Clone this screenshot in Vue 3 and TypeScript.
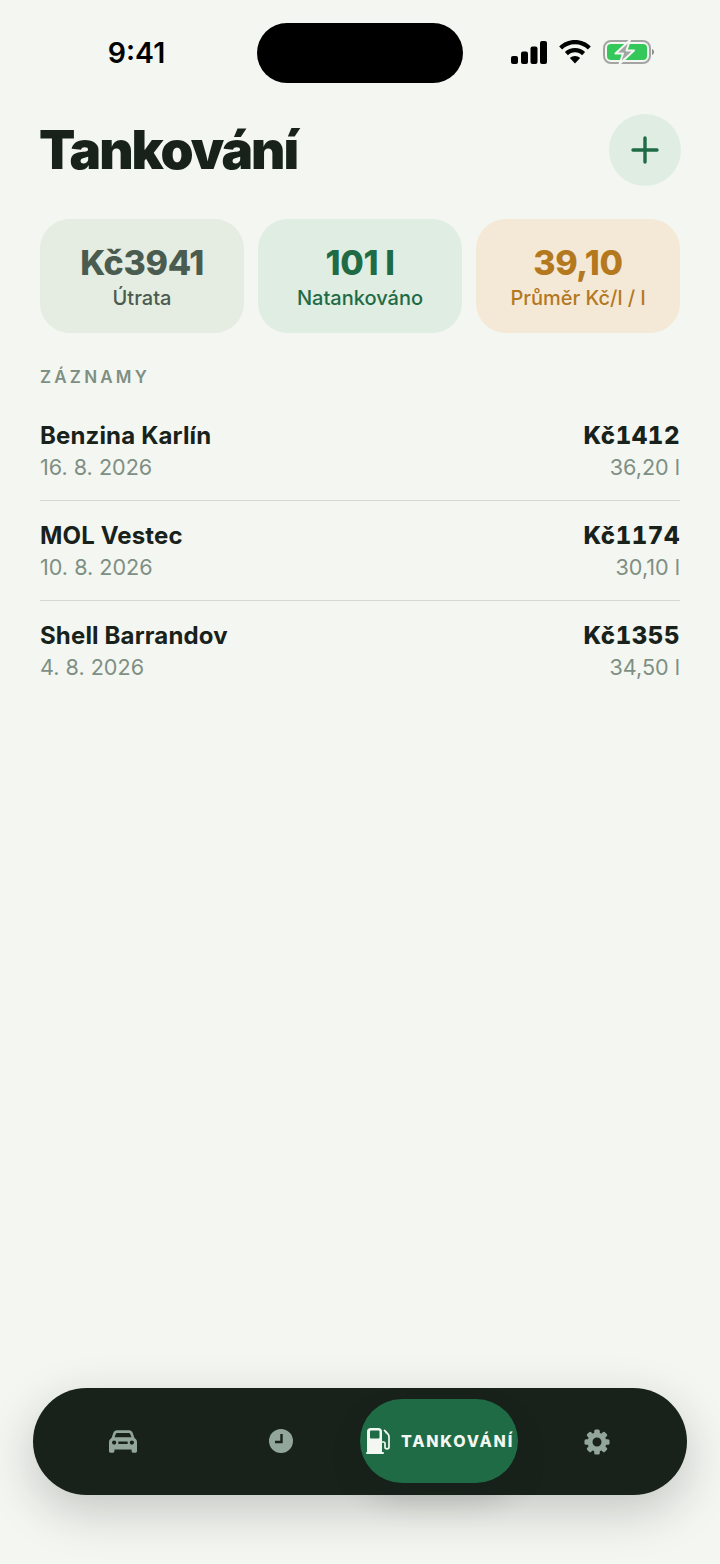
<script setup lang="ts">
interface Stat {
  value: string
  label: string
  tone: string
}

interface Fill {
  station: string
  date: string
  price: string
  litres: string
}

const stats: Stat[] = [
  { value: 'Kč3941', label: 'Útrata', tone: 'grey' },
  { value: '101 l', label: 'Natankováno', tone: 'green' },
  { value: '39,10', label: 'Průměr Kč/l / l', tone: 'amber' },
]

const fills: Fill[] = [
  { station: 'Benzina Karlín', date: '16. 8. 2026', price: 'Kč1412', litres: '36,20 l' },
  { station: 'MOL Vestec', date: '10. 8. 2026', price: 'Kč1174', litres: '30,10 l' },
  { station: 'Shell Barrandov', date: '4. 8. 2026', price: 'Kč1355', litres: '34,50 l' },
]

// the settings cog has eight teeth
const gearTeeth = [0, 45, 90, 135, 180, 225, 270, 315]
</script>

<template>
  <div class="screen">
    <!-- Status bar -->
    <div class="status-bar">
      <span class="clock">9:41</span>
      <div class="island"></div>
      <div class="status-icons">
        <svg width="36" height="23" viewBox="0 0 36 23" fill="#000">
          <rect x="0" y="15" width="7" height="8" rx="2" />
          <rect x="10" y="10.500" width="7" height="12.500" rx="2" />
          <rect x="19.500" y="5.500" width="7" height="17.500" rx="2" />
          <rect x="29" y="0" width="7" height="23" rx="2" />
        </svg>
        <svg width="32" height="24" viewBox="0 0 32 24" fill="#000">
          <path d="M16 0C9.800 0 4.300 2.400.2 6.400l2.900 3.100C6.400 6.200 11 4.200 16 4.200s9.600 2 12.900 5.300l2.900-3.100C27.700 2.400 22.200 0 16 0z" />
          <path d="M16 8c-3.900 0-7.500 1.500-10.100 4.100l3 3.100C10.700 13.300 13.200 12.200 16 12.200s5.300 1.100 7.100 3l3-3.100C23.500 9.500 19.900 8 16 8z" />
          <path d="M16 16c-2 0-3.800.8-5.100 2.100L16 23.500l5.100-5.400C19.800 16.800 18 16 16 16z" />
        </svg>
        <svg width="51" height="24" viewBox="0 0 51 24">
          <rect x="1" y="1" width="46" height="22" rx="7" fill="none" stroke="#a3a5a3" stroke-width="2" />
          <rect x="4" y="4" width="40" height="16" rx="4" fill="#34c759" />
          <path d="M49 9c1.200.4 2 1.600 2 3s-.8 2.600-2 3z" fill="#8c8e8c" />
          <path d="M27 0 12.500 13.500H20L16.500 24 31 10.500h-7.500z" fill="#a3a5a3" stroke="#f4f6f1" stroke-width="2" stroke-linejoin="round" />
        </svg>
      </div>
    </div>

    <header class="page-header">
      <h1 class="page-title">Tankování</h1>
      <button class="add-btn" aria-label="Přidat">
        <svg width="28" height="28" viewBox="0 0 28 28" stroke="#1f6b45" stroke-width="3.400" stroke-linecap="round">
          <path d="M14 2v24M2 14h24" />
        </svg>
      </button>
    </header>

    <section class="stats">
      <div v-for="stat in stats" :key="stat.label" class="stat-card" :class="stat.tone">
        <span class="stat-value">{{ stat.value }}</span>
        <span class="stat-label">{{ stat.label }}</span>
      </div>
    </section>

    <h2 class="section-title">ZÁZNAMY</h2>

    <ul class="fill-list">
      <li v-for="fill in fills" :key="fill.station" class="fill-row">
        <div class="fill-col">
          <span class="fill-station">{{ fill.station }}</span>
          <span class="fill-meta">{{ fill.date }}</span>
        </div>
        <div class="fill-col right">
          <span class="fill-price">{{ fill.price }}</span>
          <span class="fill-meta">{{ fill.litres }}</span>
        </div>
      </li>
    </ul>

    <!-- Bottom navigation -->
    <nav class="tab-bar">
      <div class="tab">
        <svg width="28" height="23" viewBox="0 0 30 24" fill="#93a69b">
          <path fill-rule="evenodd" d="M8.500 0h13c1.800 0 3.200 1 3.800 2.600L27.300 8.200c1.600.9 2.700 2.500 2.700 4.400V22.500c0 .9-.7 1.500-1.500 1.500h-2.800c-.9 0-1.500-.6-1.500-1.500V20.600H5.800v1.900c0 .9-.6 1.500-1.500 1.500H1.500C.7 24 0 23.400 0 22.500V12.600c0-1.900 1.100-3.500 2.700-4.400L4.700 2.600C5.300 1 6.700 0 8.500 0zM8.800 2.800c-.8 0-1.400.4-1.600 1.100L5.900 7.500h18.200l-1.300-3.600c-.2-.7-.8-1.100-1.600-1.100zM5.500 10.800a2.300 2.300 0 1 0 0 4.600 2.300 2.300 0 0 0 0-4.600zm19 0a2.300 2.300 0 1 0 0 4.600 2.300 2.300 0 0 0 0-4.600zM10 12v2.600h10V12z" />
        </svg>
      </div>
      <div class="tab">
        <svg width="24" height="24" viewBox="0 0 24 24">
          <circle cx="12" cy="12" r="12" fill="#93a69b" />
          <path d="M12.500 5v8H6" fill="none" stroke="#18221b" stroke-width="2.400" />
        </svg>
      </div>
      <div class="tab active">
        <svg width="25" height="26" viewBox="0 0 25 26">
          <path d="M1 3.500C1 1.500 2.500 0 4.500 0h8c2 0 3.500 1.500 3.500 3.500V24H1z" fill="#f4f6f1" />
          <rect x="4" y="2.500" width="9.500" height="8" rx="1" fill="#1f6b45" />
          <rect x="0" y="24" width="18" height="2" rx="1" fill="#f4f6f1" />
          <path d="M16 14h1.500c1 0 1.500.8 1.500 1.800v3.200c0 2.400 4 2.400 4 0V9c0-1.800-.8-2.800-1.800-3.800L18 2" fill="none" stroke="#f4f6f1" stroke-width="1.700" />
          <path d="M18.500 1.500l2.500 2.500-1 2.500z" fill="#f4f6f1" />
        </svg>
        <span class="tab-label">TANKOVÁNÍ</span>
      </div>
      <div class="tab gear-tab">
        <svg width="26" height="26" viewBox="0 0 26 26" fill="#93a69b">
          <rect
            v-for="angle in gearTeeth"
            :key="angle"
            x="10.200"
            y="0.500"
            width="5.600"
            height="6"
            rx="1.500"
            :transform="`rotate(${angle} 13 13)`"
          />
          <path fill-rule="evenodd" d="M13 3.500a9.500 9.500 0 1 0 0 19 9.500 9.500 0 0 0 0-19zm0 5a4.500 4.500 0 1 1 0 9 4.500 4.500 0 0 1 0-9z" />
        </svg>
      </div>
    </nav>
  </div>
</template>

<style scoped>
.screen {
  position: relative;
  width: 720px;
  height: 1564px;
  overflow: hidden;
  background: #f4f6f1;
  font-family: Inter, "Noto Sans", sans-serif;
  color: #18221b;
}

/* Status bar */
.status-bar {
  display: grid;
  grid-template-columns: 1fr 206px 1fr;
  align-items: center;
  height: 60px;
  margin-top: 23px;
}

.clock {
  justify-self: center;
  padding-left: 16px;
  font-size: 28.500px;
  font-weight: 600;
  line-height: 60px;
  color: #000;
}

.island {
  justify-self: center;
  width: 206px;
  height: 60px;
  border-radius: 30px;
  background: #000;
}

.status-icons {
  display: flex;
  align-items: center;
  gap: 12px;
  padding: 0 0 2px 48px;
}

/* Header */
.page-header {
  display: flex;
  align-items: center;
  justify-content: space-between;
  padding: 31px 39px 0 39px;
}

.page-title {
  margin: 0;
  font-size: 53px;
  font-weight: 900;
  line-height: 72px;
  letter-spacing: -2px;
}

.add-btn {
  display: flex;
  align-items: center;
  justify-content: center;
  width: 72px;
  height: 72px;
  padding: 0;
  border: none;
  border-radius: 50%;
  background: #dfede3;
}

/* Summary cards */
.stats {
  display: grid;
  grid-template-columns: repeat(3, 1fr);
  gap: 14px;
  margin: 33px 40px 0;
}

.stat-card {
  display: flex;
  flex-direction: column;
  align-items: center;
  height: 114px;
  padding-top: 24px;
  box-sizing: border-box;
  border-radius: 30px;
}

.stat-value {
  font-size: 34px;
  font-weight: 800;
  line-height: 40px;
  letter-spacing: -0.340px;
}

.stat-label {
  margin-top: 2px;
  font-size: 20px;
  font-weight: 500;
  line-height: 27px;
}

.stat-card.grey {
  background: #e5ece1;
  color: #4a5b50;
}

.stat-card.green {
  background: #dfede3;
  color: #1f6b45;
}

.stat-card.amber {
  background: #f4e9d7;
  color: #b4781f;
}

.section-title {
  margin: 33px 40px 0;
  font-size: 17px;
  font-weight: 600;
  line-height: 22px;
  letter-spacing: 3.200px;
  color: #7e8f84;
}

/* Fill-up list */
.fill-list {
  margin: 13px 40px 0;
  padding: 0;
  list-style: none;
}

.fill-row {
  display: flex;
  justify-content: space-between;
  box-sizing: border-box;
  height: 100px;
  padding-top: 19px;
  border-bottom: 1px solid #d3d8d0;
}

.fill-row:last-child {
  border-bottom: none;
}

.fill-col {
  display: flex;
  flex-direction: column;
}

.fill-col.right {
  align-items: flex-end;
}

.fill-station {
  font-size: 24px;
  font-weight: 700;
  line-height: 32px;
  letter-spacing: 0.150px;
}

.fill-price {
  font-size: 24px;
  font-weight: 800;
  line-height: 32px;
  font-variant-numeric: tabular-nums;
  letter-spacing: 0.600px;
}

.fill-meta {
  font-size: 21.600px;
  line-height: 31px;
  color: #7e8f84;
}

/* Bottom navigation */
.tab-bar {
  position: absolute;
  left: 33px;
  top: 1388px;
  display: grid;
  grid-template-columns: repeat(4, 158px);
  box-sizing: border-box;
  width: 654px;
  height: 107px;
  padding: 11px 12px 12px 11px;
  border-radius: 54px;
  background: #18221b;
  box-shadow: 0 16px 48px rgba(24, 34, 27, 0.22);
}

.tab {
  display: flex;
  align-items: center;
  justify-content: center;
  border-radius: 42px;
}

.gear-tab {
  padding-top: 1px;
}

.tab.active {
  gap: 10px;
  padding-left: 2px;
  background: #1f6b45;
  box-shadow: 0 16px 30px rgba(24, 34, 27, 0.18);
}

.tab-label {
  font-size: 16px;
  font-weight: 800;
  letter-spacing: 1.800px;
  color: #f4f6f1;
}
</style>

<style>
body {
  background: #f4f6f1;
}
</style>
